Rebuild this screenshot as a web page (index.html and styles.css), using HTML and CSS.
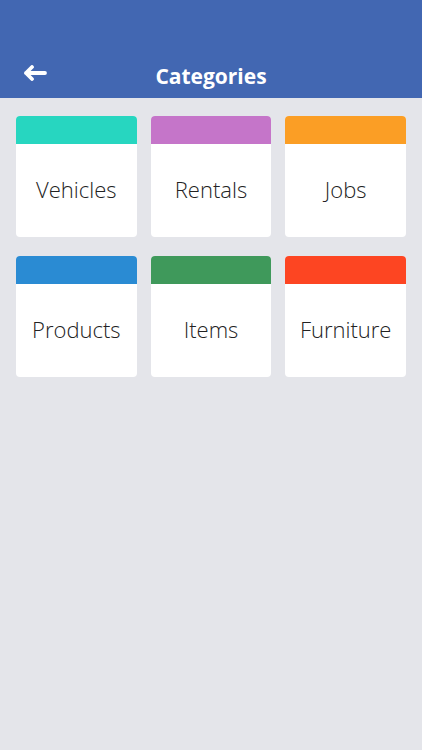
FILE: index.html
```html
<!DOCTYPE html>
<html lang="en">
<head>
  <meta charset="UTF-8">
  <meta name="viewport" content="width=device-width, initial-scale=1.0">
  <title>Categories</title>
  <link rel="stylesheet" href="styles.css">
</head>
<body>
  <div class="header">
    <a class="back" href="#">
      <svg width="24" height="16" viewBox="0 0 24 16">
        <path d="M9 2 L3 8 L9 14 M3 8 H22" fill="none" stroke="#fff" stroke-width="3.8" stroke-linecap="round" stroke-linejoin="round"/>
      </svg>
    </a>
    <h1 class="title">Categories</h1>
  </div>

  <div class="grid">
    <div class="card card-vehicles"><div class="band"></div><div class="label">Vehicles</div></div>
    <div class="card card-rentals"><div class="band"></div><div class="label">Rentals</div></div>
    <div class="card card-jobs"><div class="band"></div><div class="label">Jobs</div></div>
    <div class="card card-products"><div class="band"></div><div class="label">Products</div></div>
    <div class="card card-items"><div class="band"></div><div class="label">Items</div></div>
    <div class="card card-furniture"><div class="band"></div><div class="label">Furniture</div></div>
  </div>
</body>
</html>
```

FILE: styles.css
```css
* { margin: 0; padding: 0; box-sizing: border-box; }
html, body { height: 100%; }
body { background-color: #e4e5ea; font-family: "Open Sans", "Liberation Sans", sans-serif; }

.header { height: 98px; background-color: #4267b2; position: relative; display: flex; align-items: flex-end; justify-content: center; padding-bottom: 7px; }
.header .title { color: #fff; font-size: 21px; font-weight: 700; line-height: 30px; }
.header .back { position: absolute; left: 23px; top: 65px; display: block; width: 24px; height: 16px; }
.header .back svg { display: block; }

.grid { display: grid; grid-template-columns: repeat(3, 1fr); column-gap: 14px; row-gap: 19px; padding: 18px 16px; }
.card { height: 121px; background-color: #fff; border-radius: 4px; overflow: hidden; display: flex; flex-direction: column; }
.card .band { height: 28px; }
.card .label { flex: 1; display: flex; align-items: center; justify-content: center; font-size: 22px; font-weight: 300; color: #222; padding-bottom: 4px; }

.card-vehicles .band { background-color: #27d6c0; }
.card-rentals .band { background-color: #c575c9; }
.card-jobs .band { background-color: #fb9e25; }
.card-products .band { background-color: #2a8bd3; }
.card-items .band { background-color: #3f995b; }
.card-furniture .band { background-color: #fd4522; }
```
